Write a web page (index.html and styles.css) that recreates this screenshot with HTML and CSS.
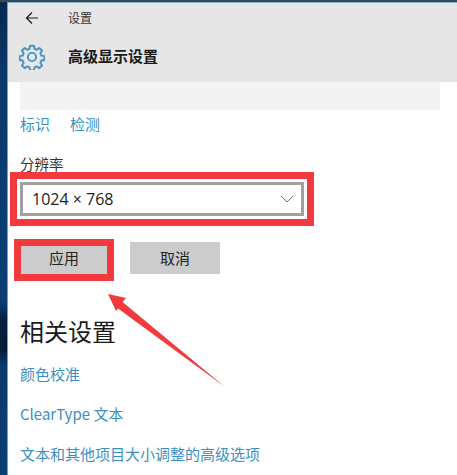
FILE: index.html
```html
<!DOCTYPE html>
<html lang="zh-CN">
<head>
<meta charset="utf-8">
<title>设置</title>
<link rel="stylesheet" href="styles.css">
</head>
<body>
<div class="desktop">
  <div class="window">
    <header class="header">
      <div class="topbar">
        <svg class="back" width="14" height="14" viewBox="0 0 14 14"><path d="M13 7H1.500M7 1.500L1.500 7 7 12.500" fill="none" stroke="#1a1a1a" stroke-width="1.200"/></svg>
        <span class="app">设置</span>
      </div>
      <div class="titlebar">
        <svg class="gear" width="26" height="26" viewBox="0 0 24 24"><path d="M10.200 1.600h3.600l.5 2.800 2.100.9 2.400-1.600 2.500 2.500-1.600 2.400.9 2.100 2.800.5v3.600l-2.800.5-.9 2.100 1.600 2.400-2.500 2.500-2.400-1.600-2.100.9-.5 2.800h-3.600l-.5-2.800-2.100-.9-2.400 1.600-2.500-2.500 1.600-2.400-.9-2.100-2.800-.5v-3.600l2.800-.5.9-2.100-1.600-2.400 2.500-2.500 2.400 1.600 2.100-.9z" fill="none" stroke="#4a94c4" stroke-width="1.800" stroke-linejoin="round"/><circle cx="12" cy="12" r="3.800" fill="none" stroke="#4a94c4" stroke-width="1.800"/></svg>
        <h1 class="title">高级显示设置</h1>
      </div>
    </header>
    <main class="content">
      <div class="preview"></div>
      <div class="links">
        <a class="link">标识</a>
        <a class="link">检测</a>
      </div>
      <div class="label">分辨率</div>
      <div class="select-mark">
        <div class="select">
          <span>1024 × 768</span>
          <svg width="14" height="8" viewBox="0 0 14 8"><path d="M1 1l6 6 6-6" fill="none" stroke="#777" stroke-width="1"/></svg>
        </div>
      </div>
      <div class="buttons">
        <div class="button-mark"><div class="button">应用</div></div>
        <div class="button">取消</div>
      </div>
      <h2 class="related">相关设置</h2>
      <a class="link row">颜色校准</a>
      <a class="link row">ClearType 文本</a>
      <a class="link row">文本和其他项目大小调整的高级选项</a>
    </main>
    <svg class="arrow" width="130" height="100" viewBox="0 0 130 100"><path d="M0 0L18 4 14.500 8 117 93 10 14.500 8 17z" fill="#f2393d"/></svg>
  </div>
</div>
</body>
</html>
```

FILE: styles.css
```css
html, body { margin: 0; padding: 0; }
body {
  width: 457px;
  height: 475px;
  overflow: hidden;
  font-family: "Noto Sans CJK SC", "Liberation Sans", sans-serif;
  color: #222;
}
.desktop {
  height: 475px;
  box-sizing: border-box;
  padding: 2px 0 0 7px;
  background:
    linear-gradient(#3d4a4d, #3d4a4d) top left / 100% 2px no-repeat,
    linear-gradient(#06284f 0, #0a3a6c 80px, #0b3f74 300px, #04203f 320px, #041c36 350px, #0a3a6c 365px, #0b3f74 475px);
  overflow: hidden;
}
.window {
  position: relative;
  height: 473px;
  background: #fff;
  border-left: 1px solid #5fa8c8;
  border-top: 1px solid #7fb8cc;
  box-sizing: border-box;
}
.header { height: 79px; background: #e6e6e6; }
.topbar {
  display: flex;
  align-items: center;
  height: 29px;
  padding-left: 17px;
}
.back { margin-right: 29px; }
.app { font-size: 12px; color: #333; }
.titlebar {
  display: flex;
  align-items: center;
  height: 50px;
  padding-left: 11px;
}
.gear { margin-right: 23px; }
.title { margin: 0 0 3px; font-size: 15px; font-weight: 700; color: #1a1a1a; }
.content { padding-left: 12px; }
.preview { width: 420px; height: 28px; background: #f3f3f3; }
.links {
  display: flex;
  gap: 20px;
  height: 28px;
  align-items: center;
}
.link { display: block; font-size: 15px; line-height: 22px; color: #3e8fc0; }
.label { margin: 17px 0 -1px; font-size: 14.500px; line-height: 18px; color: #333; }
.select-mark {
  width: 304px;
  height: 54px;
  box-sizing: border-box;
  margin-left: -10px;
  border: 7px solid #f2393d;
  padding: 3px;
  background: #fff;
}
.select {
  display: flex;
  align-items: center;
  justify-content: space-between;
  height: 34px;
  box-sizing: border-box;
  border: 3px solid #a0a0a0;
  padding: 0 7px 0 9px;
  font-family: "Open Sans", "Liberation Sans", sans-serif;
  font-size: 16px;
  color: #222;
}
.buttons {
  display: flex;
  align-items: flex-end;
  gap: 16px;
  margin: 13px 0 0 -6px;
}
.button-mark { border: 7px solid #f2393d; }
.button {
  height: 32px;
  width: 90px;
  box-sizing: border-box;
  padding-bottom: 2px;
  background: #cccccc;
  display: flex;
  align-items: center;
  justify-content: center;
  font-size: 15px;
  color: #222;
}
.button-mark .button { width: 86px; height: 28px; padding-bottom: 5px; }
.buttons > .button { margin-bottom: 7px; }
.related {
  margin: 32px 0 0;
  font-size: 24px;
  font-weight: 400;
  line-height: 36px;
  color: #1a1a1a;
}
.row { line-height: 40px; height: 40px; }
.related + .row { margin-top: 5px; }
.arrow {
  position: absolute;
  left: 100px;
  top: 291px;
}
```
